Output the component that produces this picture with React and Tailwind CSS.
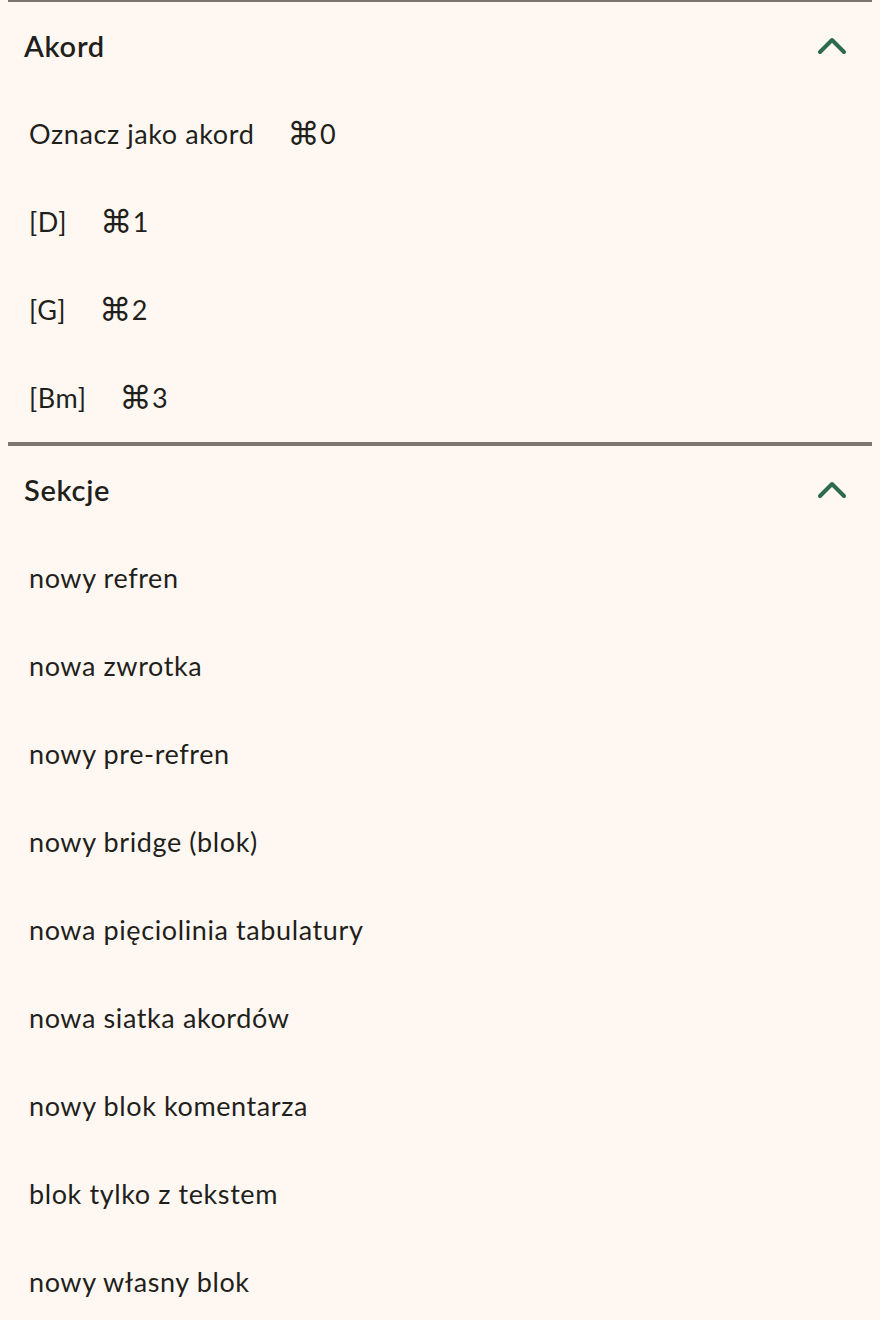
import { ChevronUp } from "lucide-react";

const chords = [
    { label: "Oznacz jako akord", key: "0" },
    { label: "[D]", key: "1" },
    { label: "[G]", key: "2" },
    { label: "[Bm]", key: "3" },
];

const sections = [
    "nowy refren",
    "nowa zwrotka",
    "nowy pre-refren",
    "nowy bridge (blok)",
    "nowa pięciolinia tabulatury",
    "nowa siatka akordów",
    "nowy blok komentarza",
    "blok tylko z tekstem",
    "nowy własny blok",
];

const Panel = ({ title, children }) => {
    return (
        <div className="border-t-2 border-b-2 border-[#7d766f]">
            <div className="flex items-center justify-between h-[88px] pl-4 pr-4">
                <h2 className="text-[29px] font-semibold tracking-[0.7px] text-[#1f1f1c]">{title}</h2>
                <ChevronUp size={48} strokeWidth={2} className="text-[#2b6a4b]" />
            </div>
            <ul>{children}</ul>
        </div>
    );
};

const Item = ({ label, shortcut }) => (
    <li className="flex items-center h-[88px] pl-[21px] text-[27px] tracking-[0.6px] text-[#1f1f1c]">
        <span>{label}</span>
        {shortcut && (
            <span className="ml-[33px] flex items-center">
                <span className="text-[32px] leading-none" style={{ fontFamily: "'DejaVu Sans', sans-serif" }}>
                    ⌘
                </span>
                <span>{shortcut}</span>
            </span>
        )}
    </li>
);

export default function App() {
    return (
        <div
            className="min-h-[1320px] bg-[#fff8f2] px-2"
            style={{ fontFamily: "Lato, 'DejaVu Sans', sans-serif" }}
        >
            <Panel title="Akord">
                {chords.map((c) => (
                    <Item key={c.key} label={c.label} shortcut={c.key} />
                ))}
            </Panel>
            <Panel title="Sekcje">
                {sections.map((s) => (
                    <Item key={s} label={s} />
                ))}
            </Panel>
        </div>
    );
}
